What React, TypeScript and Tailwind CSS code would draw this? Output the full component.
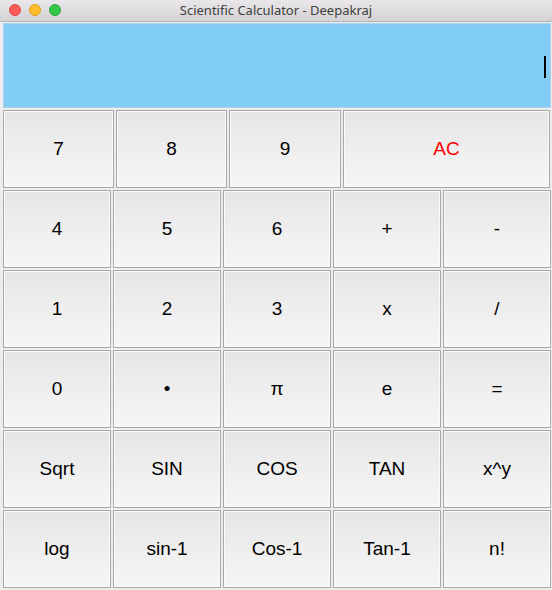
import React from 'react';

const font = { fontFamily: '"Liberation Sans", Arial, sans-serif' };

function Key({ label, className = '', red = false }: { label: string; className?: string; red?: boolean }) {
    return (
        <button
            className={`h-[78px] border border-[#a8a8a8] bg-gradient-to-b from-[#e6e6e6] to-[#f6f6f6] shadow-[inset_0_0_0_1px_#fafafa] text-[19px] flex items-center justify-center ${red ? 'text-[#ff0000]' : 'text-black'} ${className}`}
        >
            {label}
        </button>
    );
}

const rows = [
    ['4', '5', '6', '+', '-'],
    ['1', '2', '3', 'x', '/'],
    ['0', '•', 'π', 'e', '='],
    ['Sqrt', 'SIN', 'COS', 'TAN', 'x^y'],
    ['log', 'sin-1', 'Cos-1', 'Tan-1', 'n!'],
];

export default function App() {
    return (
        <div className="w-[552px] h-[590px] overflow-hidden bg-[#ededed] flex flex-col" style={font}>
            {/* title bar */}
            <div className="h-[22px] shrink-0 bg-gradient-to-b from-[#e9e7e9] to-[#d4d2d4] border-b border-[#b4b4b4] relative flex items-center justify-center">
                <div className="absolute left-[9px] top-[4px] flex gap-[8px]">
                    <span className="w-[12px] h-[12px] rounded-full bg-[#fc5b57] border border-[#e2463f]" />
                    <span className="w-[12px] h-[12px] rounded-full bg-[#fdbc2e] border border-[#e1a116]" />
                    <span className="w-[12px] h-[12px] rounded-full bg-[#33c748] border border-[#27aa35]" />
                </div>
                <span className="text-[13px] text-[#404040]" style={{ fontFamily: '"Noto Sans", "Liberation Sans", sans-serif' }}>
                    Scientific Calculator - Deepakraj
                </span>
            </div>

            <div className="pl-[3px] pt-[1px] flex flex-col">
                {/* display */}
                <div className="w-[548px] h-[85px] bg-[#80cef6] border border-[#a7d3f0] shadow-[inset_0_0_0_1px_#8cc8ef] flex items-center justify-end pr-[4px]">
                    <div className="w-[2px] h-[22px] bg-black mt-[2px]" />
                </div>

                <div className="mt-[2px] flex flex-col gap-[2px]">
                    <div className="flex gap-[2px]">
                        <Key label="7" className="w-[111px]" />
                        <Key label="8" className="w-[111px]" />
                        <Key label="9" className="w-[112px]" />
                        <Key label="AC" red className="w-[207px]" />
                    </div>
                    {rows.map((r, i) => (
                        <div key={i} className="grid grid-cols-[repeat(5,108px)] gap-[2px]">
                            {r.map((k) => (
                                <Key key={k} label={k} />
                            ))}
                        </div>
                    ))}
                </div>
            </div>
        </div>
    );
}
